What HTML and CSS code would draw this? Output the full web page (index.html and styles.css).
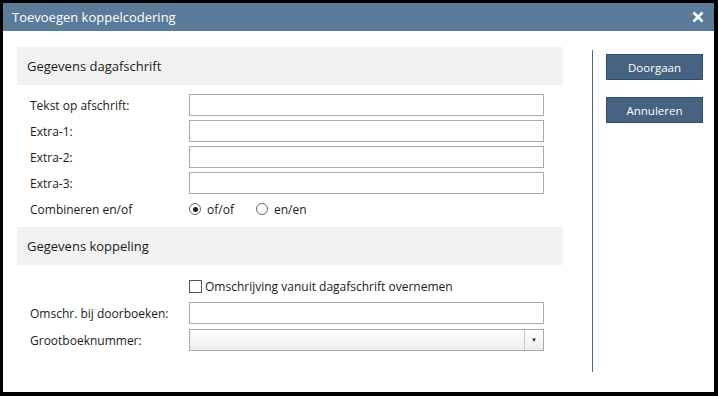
FILE: index.html
```html
<!DOCTYPE html>
<html lang="nl">
<head>
    <meta charset="UTF-8">
    <title>Toevoegen koppelcodering</title>
    <link rel="stylesheet" href="styles.css">
</head>
<body>

    <div class="dialog">
        <!-- Title bar -->
        <div class="titlebar">
            <span class="title">Toevoegen koppelcodering</span>
            <svg class="close" width="12" height="12" viewBox="0 0 12 12">
                <path d="M1.5 1.5 L10.5 10.5 M10.5 1.5 L1.5 10.5" stroke="white" stroke-width="2.6"/>
            </svg>
        </div>

        <div class="content">
            <div class="form">
                <div class="section">Gegevens dagafschrift</div>

                <div class="rows">
                    <div class="row">
                        <label>Tekst op afschrift:</label>
                        <input type="text" class="field">
                    </div>
                    <div class="row">
                        <label>Extra-1:</label>
                        <input type="text" class="field">
                    </div>
                    <div class="row">
                        <label>Extra-2:</label>
                        <input type="text" class="field">
                    </div>
                    <div class="row">
                        <label>Extra-3:</label>
                        <input type="text" class="field">
                    </div>
                    <div class="row">
                        <label>Combineren en/of</label>
                        <div class="radios">
                            <span class="radio checked"></span><span class="opt">of/of</span>
                            <span class="radio"></span><span class="opt">en/en</span>
                        </div>
                    </div>
                </div>

                <div class="section">Gegevens koppeling</div>

                <div class="rows koppeling">
                    <div class="row">
                        <label></label>
                        <div class="check"><span class="box"></span>Omschrijving vanuit dagafschrift overnemen</div>
                    </div>
                    <div class="row">
                        <label>Omschr. bij doorboeken:</label>
                        <input type="text" class="field">
                    </div>
                    <div class="row">
                        <label>Grootboeknummer:</label>
                        <div class="select">
                            <span class="select-btn">&#9660;</span>
                        </div>
                    </div>
                </div>
            </div>

            <div class="divider"></div>

            <div class="buttons">
                <button class="btn">Doorgaan</button>
                <button class="btn">Annuleren</button>
            </div>
        </div>
    </div>

</body>
</html>
```

FILE: styles.css
```css
body {
    margin: 0;
    background: #000;
    font-family: "Open Sans", "Noto Sans", sans-serif;
    font-size: 12px;
    color: #1a1a1a;
}

.dialog {
    margin: 3px 4px 0 3px;
    height: 389px;
    background: #fff;
    display: flex;
    flex-direction: column;
}

.titlebar {
    height: 28px;
    background: #5b7b9a;
    color: #fff;
    display: flex;
    align-items: center;
    justify-content: space-between;
    padding: 0 10px 0 9px;
    flex-shrink: 0;
}

.title {
    font-size: 13px;
}

.content {
    display: flex;
    padding: 16px 0 0 14px;
}

.form {
    width: 546px;
}

.section {
    height: 38px;
    background: #f2f2f2;
    display: flex;
    align-items: center;
    padding-left: 10px;
    font-size: 13px;
}

.rows {
    padding: 9px 0 7px 13px;
    display: flex;
    flex-direction: column;
    gap: 4px;
}

.rows.koppeling {
    padding-top: 10px;
    gap: 5px;
}

.row {
    display: flex;
    align-items: center;
    height: 22px;
}

.row label {
    width: 159px;
    flex-shrink: 0;
}

.field {
    width: 355px;
    height: 22px;
    box-sizing: border-box;
    border: 1px solid #ababab;
    margin: 0;
    padding: 0 4px;
}

.radios {
    display: flex;
    align-items: center;
}

.radio {
    width: 12px;
    height: 12px;
    border: 1px solid #666;
    border-radius: 50%;
    box-sizing: border-box;
    margin-right: 6px;
    position: relative;
}

.radio.checked::after {
    content: "";
    position: absolute;
    left: 2.5px;
    top: 2.5px;
    width: 5px;
    height: 5px;
    border-radius: 50%;
    background: #222;
}

.opt {
    margin-right: 22px;
}

.check {
    display: flex;
    align-items: center;
}

.box {
    width: 13px;
    height: 13px;
    border: 1px solid #555;
    box-sizing: border-box;
    margin-right: 3px;
}

.select {
    width: 355px;
    height: 22px;
    box-sizing: border-box;
    border: 1px solid #ababab;
    background: linear-gradient(#ffffff, #ececec);
    display: flex;
    justify-content: flex-end;
}

.select-btn {
    width: 18px;
    border-left: 1px solid #c8c8c8;
    font-size: 6px;
    display: flex;
    align-items: center;
    justify-content: center;
    color: #222;
}

.divider {
    width: 1px;
    height: 322px;
    background: #4a6a90;
    margin: 3px 0 0 29px;
}

.buttons {
    display: flex;
    flex-direction: column;
    gap: 17px;
    margin: 7px 0 0 13px;
}

.btn {
    width: 97px;
    height: 26px;
    background: #466482;
    border: 1px solid #2e4e6e;
    color: #fff;
    font-family: "Open Sans", "Noto Sans", sans-serif;
    font-size: 11.5px;
    padding: 0;
}
```
